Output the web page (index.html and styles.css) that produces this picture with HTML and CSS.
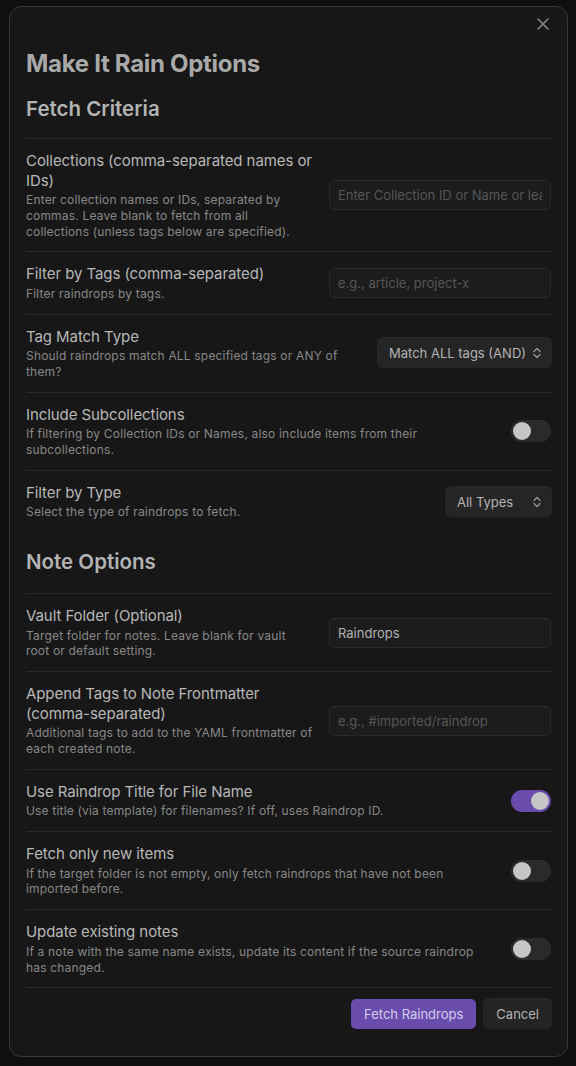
FILE: index.html
```html
<!DOCTYPE html>
<html lang="en">
<head>
<meta charset="utf-8">
<title>Make It Rain Options</title>
<link rel="stylesheet" href="styles.css">
</head>
<body>
<div class="modal">
  <button class="close" aria-label="Close">
    <svg width="14" height="14" viewBox="0 0 14 14"><path d="M2 2L12 12M12 2L2 12" stroke="#8c8c8c" stroke-width="1.5" stroke-linecap="round" fill="none"/></svg>
  </button>
  <h1 class="modal-title">Make It Rain Options</h1>

  <div class="heading first">Fetch Criteria</div>

  <div class="item">
    <div class="info">
      <div class="name">Collections (comma-separated names or IDs)</div>
      <div class="desc">Enter collection names or IDs, separated by commas. Leave blank to fetch from all collections (unless tags below are specified).</div>
    </div>
    <div class="control"><input class="text" type="text" placeholder="Enter Collection ID or Name or leave blank"></div>
  </div>

  <div class="item">
    <div class="info">
      <div class="name">Filter by Tags (comma-separated)</div>
      <div class="desc">Filter raindrops by tags.</div>
    </div>
    <div class="control"><input class="text" type="text" placeholder="e.g., article, project-x"></div>
  </div>

  <div class="item">
    <div class="info">
      <div class="name">Tag Match Type</div>
      <div class="desc">Should raindrops match ALL specified tags or ANY of them?</div>
    </div>
    <div class="control">
      <div class="select">Match ALL tags (AND)<svg class="chev" width="8" height="12" viewBox="0 0 8 12"><path d="M1 4.5L4 1.5L7 4.5M1 7.5L4 10.5L7 7.5" stroke="#9a9a9a" stroke-width="1.2" fill="none" stroke-linecap="round" stroke-linejoin="round"/></svg></div>
    </div>
  </div>

  <div class="item">
    <div class="info">
      <div class="name">Include Subcollections</div>
      <div class="desc">If filtering by Collection IDs or Names, also include items from their subcollections.</div>
    </div>
    <div class="control"><div class="toggle"><span class="knob"></span></div></div>
  </div>

  <div class="item">
    <div class="info">
      <div class="name">Filter by Type</div>
      <div class="desc">Select the type of raindrops to fetch.</div>
    </div>
    <div class="control">
      <div class="select short">All Types<svg class="chev" width="8" height="12" viewBox="0 0 8 12"><path d="M1 4.5L4 1.5L7 4.5M1 7.5L4 10.5L7 7.5" stroke="#9a9a9a" stroke-width="1.2" fill="none" stroke-linecap="round" stroke-linejoin="round"/></svg></div>
    </div>
  </div>

  <div class="heading">Note Options</div>

  <div class="item">
    <div class="info narrow">
      <div class="name">Vault Folder (Optional)</div>
      <div class="desc">Target folder for notes. Leave blank for vault root or default setting.</div>
    </div>
    <div class="control"><input class="text" type="text" value="Raindrops"></div>
  </div>

  <div class="item">
    <div class="info">
      <div class="name">Append Tags to Note Frontmatter (comma-separated)</div>
      <div class="desc">Additional tags to add to the YAML frontmatter of each created note.</div>
    </div>
    <div class="control"><input class="text" type="text" placeholder="e.g., #imported/raindrop"></div>
  </div>

  <div class="item">
    <div class="info">
      <div class="name">Use Raindrop Title for File Name</div>
      <div class="desc">Use title (via template) for filenames? If off, uses Raindrop ID.</div>
    </div>
    <div class="control"><div class="toggle on"><span class="knob"></span></div></div>
  </div>

  <div class="item">
    <div class="info">
      <div class="name">Fetch only new items</div>
      <div class="desc">If the target folder is not empty, only fetch raindrops that have not been imported before.</div>
    </div>
    <div class="control"><div class="toggle"><span class="knob"></span></div></div>
  </div>

  <div class="item">
    <div class="info">
      <div class="name">Update existing notes</div>
      <div class="desc">If a note with the same name exists, update its content if the source raindrop has changed.</div>
    </div>
    <div class="control"><div class="toggle"><span class="knob"></span></div></div>
  </div>

  <div class="buttons">
    <button class="btn cta">Fetch Raindrops</button>
    <button class="btn">Cancel</button>
  </div>
</div>
</body>
</html>
```

FILE: styles.css
```css
* { box-sizing: border-box; }
html, body { margin: 0; padding: 0; }
body {
  background: #0f0f0f;
  font-family: Inter, "Noto Sans", "Liberation Sans", sans-serif;
  color: #b5b5b5;
  width: 576px;
  height: 1066px;
  overflow: hidden;
}
.modal {
  position: relative;
  width: 559px;
  height: 1051px;
  margin: 6px 0 0 9px;
  background: #171717;
  border: 1px solid #383838;
  border-radius: 12px;
  padding: 16px 16px 27px;
}
.close {
  position: absolute;
  top: 5px;
  right: 12px;
  width: 24px;
  height: 24px;
  padding: 0;
  border: none;
  background: transparent;
  display: flex;
  align-items: center;
  justify-content: center;
}
.modal-title {
  margin: 26px 0 0;
  font-size: 24px;
  line-height: 30px;
  font-weight: 700;
  letter-spacing: -0.3px;
  color: #a9a9a9;
}
.heading {
  font-size: 20.5px;
  line-height: 26px;
  font-weight: 600;
  color: #b3b3b3;
  padding: 17px 0 18px;
}
.heading.first { padding-top: 17px; padding-bottom: 16px; }
.item {
  display: flex;
  align-items: center;
  border-top: 1px solid #2a2a2a;
  padding: 12px 0;
}
.info {
  flex: 1 1 auto;
  min-width: 0;
  margin-right: 16px;
}
.info.narrow { margin-right: 20px; }
.name {
  font-size: 15px;
  line-height: 19.5px;
  letter-spacing: -0.08px;
  color: #b8b8b8;
}
.desc {
  font-size: 12px;
  line-height: 15.8px;
  padding-top: 2px;
  color: #888888;
  letter-spacing: 0.18px;
}
.control {
  flex: 0 0 auto;
  display: flex;
  justify-content: flex-end;
  align-items: center;
}
.text {
  width: 222px;
  height: 30px;
  background: #1c1c1c;
  border: 1px solid #292929;
  border-radius: 5px;
  padding: 0 8px;
  font-family: inherit;
  font-size: 13px;
  color: #b3b3b3;
  outline: none;
}
.text::placeholder { color: #565656; }
.select {
  display: flex;
  align-items: center;
  height: 30px;
  width: 173px;
  padding: 0 10px 0 11px;
  background: #252525;
  border-radius: 5px;
  box-shadow: 0 1px 2px rgba(0,0,0,0.45), 0 0 0 1px #2b2b2b;
  font-size: 13px;
  color: #b3b3b3;
  white-space: nowrap;
  justify-content: space-between;
}
.select.short { width: 105px; }
.toggle {
  width: 40px;
  height: 22px;
  border-radius: 11px;
  background: #2a2a2a;
  box-shadow: inset 0 0 0 1px #2c2c2c;
  padding: 2px;
  display: flex;
}
.knob {
  width: 18px;
  height: 18px;
  border-radius: 50%;
  background: #c6c6c6;
}
.toggle.on { background: #6a4cad; justify-content: flex-end; box-shadow: none; }
.buttons {
  display: flex;
  justify-content: flex-end;
  gap: 8px;
  border-top: 1px solid #2a2a2a;
  padding-top: 11px;
}
.btn {
  height: 30px;
  padding: 0 12px;
  border: none;
  border-radius: 5px;
  background: #242424;
  box-shadow: 0 1px 2px rgba(0,0,0,0.45), 0 0 0 1px #2b2b2b;
  font-family: inherit;
  font-size: 13px;
  color: #b5b5b5;
}
.btn.cta { background: #6a4cad; color: #d4cceb; box-shadow: none; padding: 0 13px; }
```
